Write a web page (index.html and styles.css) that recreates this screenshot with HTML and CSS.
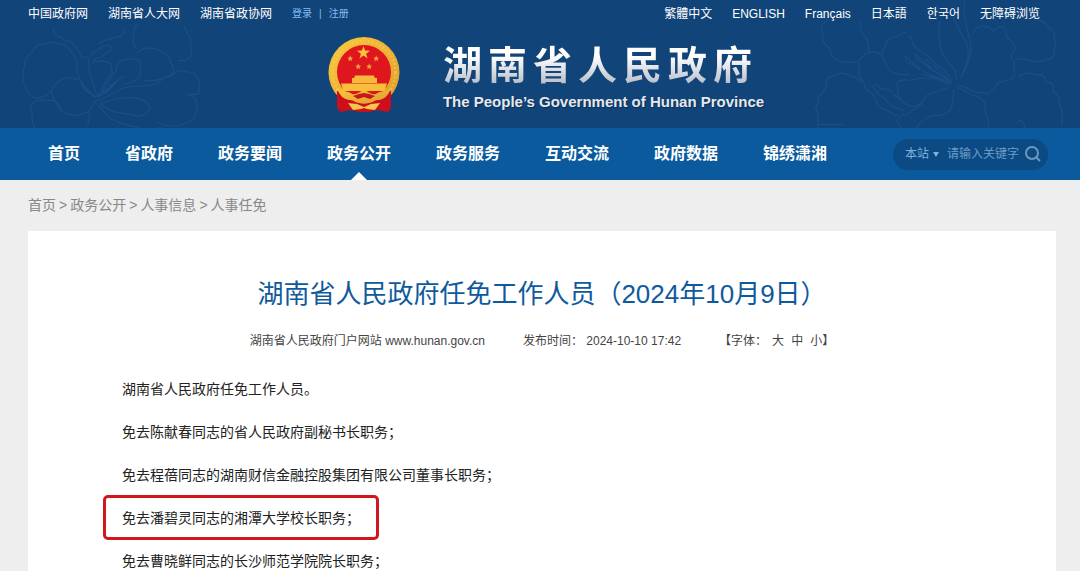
FILE: index.html
```
<!DOCTYPE html>
<html lang="zh-CN">
<head>
  <meta charset="UTF-8" />
  <meta name="viewport" content="width=device-width, initial-scale=1" />
  <title>湖南省人民政府任免工作人员（2024年10月9日）</title>
  <link rel="stylesheet" href="styles.css">
</head>
<body>
  <header class="header">
    <!-- 木芙蓉底纹 -->
    <svg class="flower flower-left" viewBox="18 0 600 354" width="200" height="118" aria-hidden="true">
      <path d="M258 262C240 250 220 240 216 225C212 205 204 205 200 208C180 196 160 206 146 214C126 226 132 240 118 248C104 262 90 264 78 264C58 262 50 244 48 232C34 216 36 206 42 198C34 182 46 172 44 162C48 140 56 132 68 126C76 104 90 104 100 102C124 92 138 100 154 102C174 106 180 118 188 132C204 150 206 160 200 180C204 206 226 240 258 262" />
      <path d="M130 52C132 76 136 82 152 80C162 96 172 92 184 96C200 106 206 124 214 142C226 138 240 142 236 160C240 180 234 190 244 206C252 226 256 244 262 262M238 144C246 120 262 128 272 112C286 104 300 106 308 114C298 128 294 130 284 134C270 146 262 140 252 150" />
      <path d="M346 56C344 72 330 84 314 82C300 90 280 88 266 102M380 118C366 102 368 90 372 80C368 60 374 48 386 42M520 46C528 58 532 64 530 70C542 78 544 90 540 98C548 110 540 120 544 128C544 142 532 154 504 152" />
      <path d="M246 156C272 152 296 154 302 164C312 176 300 190 306 206M318 190C318 166 326 150 344 150C364 144 386 146 392 158C390 180 396 200 380 210C372 214 360 220 340 224M380 130C398 112 430 108 446 122C466 130 480 144 482 158C496 178 492 192 480 196C460 208 440 214 400 212" />
      <path d="M262 272C300 260 320 238 350 232C372 224 410 234 436 222C450 214 462 200 480 200C496 186 516 178 530 186C546 184 554 192 560 200C574 214 566 228 566 234C572 256 560 254 530 254C570 262 556 280 562 292C556 304 558 316 552 322C540 336 528 342 510 346C484 350 462 348 440 336M270 280C300 274 320 262 352 264C388 260 410 272 420 290C418 306 400 320 382 318C352 310 340 312 320 306C300 306 284 290 270 280" />
      <path d="M124 246C126 264 140 280 152 300C168 318 188 310 200 318C222 308 236 310 240 300C246 286 254 276 260 268M80 272C110 268 130 268 144 280C150 290 150 296 154 304M80 272C60 286 56 290 68 310C60 324 70 340 74 354M240 304C236 322 238 332 232 350M264 284C276 300 290 318 310 330C340 342 360 352 390 350" />
      <path d="M262 262L300 190M264 262L320 212M270 258L312 224M276 250L300 206L312 186M284 254L330 204L346 200M290 246L304 222" />
    </svg>
    <svg class="flower flower-right" viewBox="15 0 810 384" width="270" height="128" aria-hidden="true">
      <path d="M66 60C46 76 48 90 54 104C50 126 62 134 72 142C76 168 92 180 108 184C128 190 142 186 158 184M164 62C166 86 166 96 178 108C194 120 190 138 192 154M228 162C210 156 196 152 184 162C162 174 156 188 164 202C154 220 168 236 178 250C178 270 192 278 206 284C210 310 230 330 250 332C264 346 270 344 280 348" />
      <path d="M304 100C296 92 282 104 278 112C262 106 246 120 242 130C244 142 232 150 230 158C232 178 240 184 244 192C248 216 280 228 314 222M310 106C324 116 320 128 328 138C346 150 346 162 366 166C384 176 384 188 398 196C418 210 432 226 440 246" />
      <path d="M408 60C396 82 404 106 404 122C402 154 420 176 432 190C448 204 450 214 456 236M446 50C458 90 478 112 486 136C496 166 484 190 472 226M480 0C468 50 496 100 498 146C496 180 480 212 466 236" />
      <path d="M504 102C506 84 524 76 540 80C554 76 560 90 566 94C582 72 602 78 604 100C598 116 620 116 628 134C636 146 624 156 618 168C626 182 632 194 626 206C634 222 628 230 618 238C600 246 586 240 576 252C570 272 556 270 548 282C530 276 510 280 494 268C480 262 470 258 460 256" />
      <path d="M700 60C722 66 724 74 732 84C752 94 752 102 746 112C756 130 752 140 746 148C752 164 742 178 726 178C706 188 680 186 664 178C650 178 640 178 630 176M640 230C664 218 682 216 692 226C712 218 722 230 724 246C744 248 750 260 744 274C756 286 766 290 762 310C776 330 768 350 772 376M636 370C640 358 650 362 656 368L660 384" />
      <path d="M456 262C480 270 492 284 512 288C538 296 544 312 540 330C548 350 550 366 552 384M446 266C446 296 444 310 438 328C420 348 410 342 402 348C386 340 378 352 360 356C348 366 340 372 334 384M430 262C408 266 400 276 386 278C370 284 360 286 356 300C350 320 332 322 318 334C306 348 286 340 280 356C272 370 284 376 290 384" />
      <path d="M38 384C36 366 44 350 36 338C28 322 34 316 42 306C36 294 38 290 46 288C60 276 56 262 66 256C60 240 70 228 82 230C102 216 120 216 136 228C154 230 166 240 178 250M38 374H118M204 258C216 248 222 256 226 266C240 270 252 262 260 276C272 296 290 296 298 310C318 322 336 322 350 306M204 258C210 284 230 284 240 296C254 318 270 322 300 334M300 240C276 240 270 250 280 262C276 282 280 290 290 300M300 240C330 244 350 226 380 236C400 232 420 246 434 256" />
      <path d="M440 250L386 196M438 246L372 204M436 250L352 212M432 244L346 184L330 176M380 204L326 160M346 206L300 168L304 184L346 210M400 236L344 220M378 190L360 176" />
    </svg>

    <div class="topbar">
      <nav class="top-links">
        <a href="#">中国政府网</a>
        <a href="#">湖南省人大网</a>
        <a href="#">湖南省政协网</a>
        <span class="login"><a href="#">登录</a><span>|</span><a href="#">注册</a></span>
      </nav>
      <nav class="top-links">
        <a href="#" lang="zh-TW">繁體中文</a>
        <a href="#">ENGLISH</a>
        <a href="#">Français</a>
        <a href="#" lang="ja">日本語</a>
        <a href="#" lang="ko">한국어</a>
        <a href="#">无障碍浏览</a>
      </nav>
    </div>

    <div class="brand">
      <svg class="emblem" viewBox="0 0 72 76" width="72" height="76" aria-hidden="true">
        <defs>
          <linearGradient id="gold" x1="0" y1="0" x2="1" y2="1">
            <stop offset="0" stop-color="#fbc93e" />
            <stop offset="1" stop-color="#dd9a2e" />
          </linearGradient>
        </defs>
        <circle cx="36" cy="35.500" r="35.500" fill="url(#gold)" />
        <circle cx="36" cy="35.500" r="31.500" fill="none" stroke="#f9cf58" stroke-width="3" stroke-dasharray="2 2" opacity=".5" />
        <circle cx="36" cy="35" r="27" fill="#e0161f" />
        <path d="M35.500 9l1.600 4.600 4.900.1-3.900 3 1.400 4.700-4-2.800-4 2.800 1.400-4.700-3.900-3 4.900-.1z" fill="#f8c23c" />
        <path id="star" d="M22.200 18.500l.8 2.100 2.200.1-1.700 1.400.6 2.200-1.900-1.300-1.900 1.300.6-2.200-1.700-1.400 2.200-.1z" fill="#f0a83c" />
        <use href="#star" x="26" />
        <use href="#star" x="8" y="8" />
        <use href="#star" x="19" y="8" />
        <path d="M27 38.500h19l.8 2.500h2.200v5H24v-5h2.200z" fill="#f6b93e" />
        <path d="M13 46.500h46l-2.500 7.500H15.500z" fill="#f8bf3a" />
        <path d="M9 54c7 0 8 5 14 7l13-3 13 3c6-2 7-7 14-7v17l-3 4-11-2-8 2H31l-8-2-10 2-4-4z" fill="#cc0f1a" />
        <path d="M9 51c6 4 11 3 15 6c4 1 6-1 8-2c3-2 5-2 8 0c2 1 4 3 8 2c4-3 9-2 15-6c-2 7-7 12-13 12c-4 0-5 3-9 3c-3 1-7 1-10 0c-4 0-5-3-9-3c-6 0-11-5-13-12z" fill="url(#gold)" />
        <path d="M25 59l6-2 5-1 5 1 6 2-5 3-6-2-6 2z" fill="#c8161c" />
        <path d="M20 66l9 1 7 3 7-3 9-1-5 7-8-1-3-1-3 1-8 1z" fill="#f7c64e" />
      </svg>
      <div class="brand-text">
        <div class="brand-name">湖南省人民政府</div>
        <div class="brand-en">The People’s Government of Hunan Province</div>
      </div>
    </div>
  </header>

  <div class="navbar">
    <nav class="menu">
      <a href="#">首页</a>
      <a href="#">省政府</a>
      <a href="#">政务要闻</a>
      <a href="#" class="active">政务公开</a>
      <a href="#">政务服务</a>
      <a href="#">互动交流</a>
      <a href="#">政府数据</a>
      <a href="#">锦绣潇湘</a>
    </nav>
    <form class="search">
      <select aria-label="搜索范围">
        <option>本站</option>
      </select>
      <svg class="caret" viewBox="0 0 6 5" width="6" height="5" aria-hidden="true"><path d="M0 0h6L3 5z" /></svg>
      <input type="text" placeholder="请输入关键字" aria-label="关键字" />
      <button type="submit" aria-label="搜索">
        <svg viewBox="0 0 16 16" width="16" height="16"><circle cx="7" cy="7" r="6" /><path d="M11 11l4 4" /></svg>
      </button>
    </form>
  </div>

  <nav class="breadcrumb">
    <a href="#">首页</a><span>&gt;</span><a href="#">政务公开</a><span>&gt;</span><a href="#">人事信息</a><span>&gt;</span><a href="#">人事任免</a>
  </nav>

  <main class="article">
    <h1>湖南省人民政府任免工作人员（2024年10月9日）</h1>
    <div class="meta">
      <span>湖南省人民政府门户网站 www.hunan.gov.cn</span>
      <span>发布时间： 2024-10-10 17:42</span>
      <span>【字体：<span class="sizes"><button type="button">大</button><button type="button">中</button><button type="button">小</button></span>】</span>
    </div>
    <div class="content">
      <p>湖南省人民政府任免工作人员。</p>
      <p>免去陈献春同志的省人民政府副秘书长职务；</p>
      <p>免去程蓓同志的湖南财信金融控股集团有限公司董事长职务；</p>
      <p class="marked">免去潘碧灵同志的湘潭大学校长职务；</p>
      <p>免去曹晓鲜同志的长沙师范学院院长职务；</p>
    </div>
  </main>
</body>
</html>
```
FILE: styles.css
```
* { box-sizing: border-box; }
body {
  margin: 0;
  background: #eee;
  color: #222;
  font-family: "Liberation Sans", "Noto Sans CJK SC", sans-serif;
  font-size: 14px;
}
a { color: inherit; text-decoration: none; }
button, input, select {
  font: inherit; color: inherit; background: none;
  border: none; padding: 0; margin: 0; outline: none;
}
button { cursor: pointer; }

/* Header */
.header {
  position: relative; overflow: hidden;
  height: 128px; background: #114478; color: #fff;
}
.flower { position: absolute; fill: none; stroke: #194f86; stroke-width: 4; }
.flower-left { left: 16px; bottom: 0; }
.flower-right { right: 0; top: 0; }
.topbar {
  position: relative;
  display: flex; justify-content: space-between;
  padding: 4px 40px 0 28px;
  font-size: 12px; line-height: 20px;
}
.top-links { display: flex; gap: 20px; }
.login { display: flex; gap: 7px; font-size: 10px; color: #83bcf0; }
.brand {
  position: relative;
  display: flex; justify-content: center; gap: 43px;
  padding: 13px 0 0 12px;
}
.brand-name {
  margin-top: 4px;
  font-size: 39px; line-height: 50px; font-weight: 700;
  letter-spacing: 6px;
  background: linear-gradient(#fff 30%, #b9bfca 85%);
  -webkit-background-clip: text; background-clip: text;
  color: transparent;
}
.brand-en {
  font-size: 15px; line-height: 22px; font-weight: 700;
  color: #e6e8ec; text-shadow: 1px 1px 1px #0a2f58;
}

/* Navigation */
.navbar {
  display: flex; justify-content: space-between; align-items: center;
  height: 52px; padding: 0 32px 0 48px;
  background: #0a5a9d; color: #fff;
}
.menu { display: flex; gap: 45px; font-size: 16px; font-weight: 700; line-height: 52px; }
.menu a { white-space: nowrap; }
.menu .active { position: relative; }
.menu .active::after {
  content: ""; position: absolute; left: 50%; bottom: 0;
  margin-left: -8px;
  border: 8px solid transparent; border-top: none; border-bottom-color: #fff;
}
.search {
  display: flex; align-items: center;
  width: 155px; height: 31px; padding: 0 7px 0 12px;
  border-radius: 16px; background: #0b4a82;
  font-size: 12px; color: #7fb0da;
}
.search select { appearance: none; width: 28px; }
.caret { fill: #7fb0da; margin-right: 8px; }
.search input { flex: 1; min-width: 0; }
.search input::placeholder { color: #6c9cc8; opacity: 1; }
.search button { display: flex; }
.search button svg { fill: none; stroke: #6c98c0; stroke-width: 2; }

/* Breadcrumb */
.breadcrumb {
  display: flex; gap: 3px;
  padding: 15px 28px 16px;
  line-height: 20px; color: #888;
}

/* Article */
.article {
  margin: 0 24px 0 28px; padding: 41px 94px 0;
  background: #fff;
}
h1 {
  margin: 0; text-align: center;
  font-size: 26px; line-height: 44px; font-weight: 400; color: #0f5a9c;
}
.meta {
  display: flex; justify-content: center; gap: 38px;
  margin-top: 14px;
  font-size: 12px; line-height: 22px; color: #444;
}
.sizes { display: inline-flex; gap: 7px; padding-left: 5px; }
.content {
  display: flex; flex-direction: column; gap: 23px;
  margin-top: 27px;
}
.content p { margin: 0; line-height: 20px; }
.content .marked {
  width: fit-content;
  margin: -13px -19px -12px; padding: 10px 16px 9px;
  border: 3px solid #d0171d; border-radius: 5px;
}
```
